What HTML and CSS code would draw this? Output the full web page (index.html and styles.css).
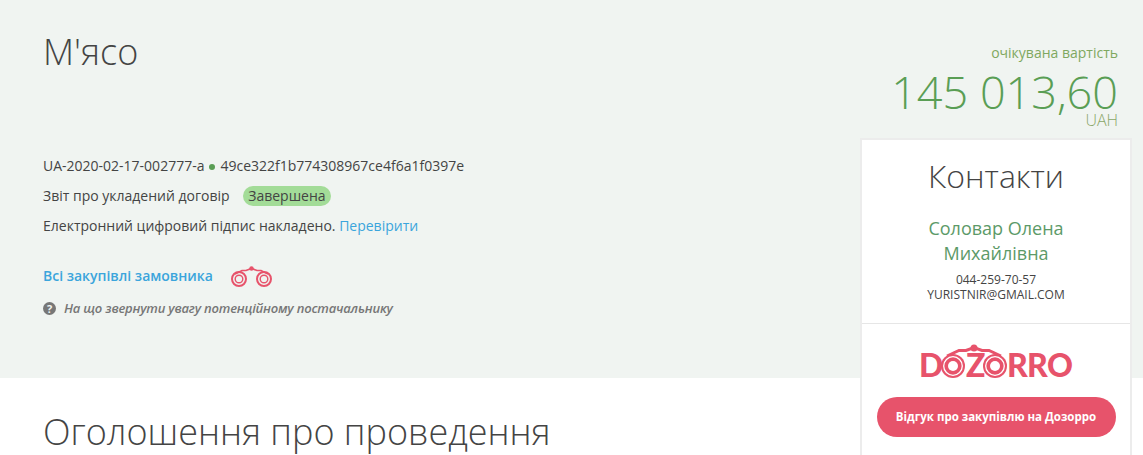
FILE: index.html
```html
<!DOCTYPE html>
<html lang="uk">

<head>
    <meta charset="UTF-8">
    <meta name="viewport" content="width=device-width, initial-scale=1.0">
    <title>М'ясо</title>
    <link rel="stylesheet" href="styles.css">
</head>

<body>
    <section class="hero">
        <div class="info">
            <h1 class="title">М'ясо</h1>
            <div class="meta">
                <p class="meta-row">UA-2020-02-17-002777-a<span class="dot"></span>49ce322f1b774308967ce4f6a1f0397e</p>
                <p class="meta-row">Звіт про укладений договір <span class="status">Завершена</span></p>
                <p class="meta-row">Електронний цифровий підпис накладено. <a class="link" href="#">Перевірити</a></p>
            </div>
            <div class="buyer">
                <a class="link buyer-link" href="#">Всі закупівлі замовника</a>
                <svg class="binoculars" viewBox="0 0 41 21" width="41" height="21">
                    <g fill="none" stroke="#e7536b">
                        <path d="M4 8 L11 4.500 L15 4.500 L20.500 2.500 L26 4.500 L30 4.500 L37 8" stroke-width="1.700" />
                        <circle cx="8" cy="13" r="7" stroke-width="2" />
                        <circle cx="8" cy="13" r="3.800" stroke-width="1.400" />
                        <circle cx="33" cy="13" r="7" stroke-width="2" />
                        <circle cx="33" cy="13" r="3.800" stroke-width="1.400" />
                    </g>
                    <circle cx="20.500" cy="2.500" r="2.200" fill="#e7536b" />
                </svg>
            </div>
            <p class="hint"><span class="hint-icon">?</span><em>На що звернути увагу потенційному постачальнику</em></p>
        </div>

        <aside class="side">
            <div class="price">
                <div class="price-label">очікувана вартість</div>
                <div class="price-value">145 013,60</div>
                <div class="price-currency">UAH</div>
            </div>
            <div class="card">
                <div class="contacts">
                    <h2 class="contacts-title">Контакти</h2>
                    <div class="contacts-name">Соловар Олена Михайлівна</div>
                    <div class="contacts-line">044-259-70-57</div>
                    <div class="contacts-line">YURISTNIR@GMAIL.COM</div>
                </div>
                <div class="dozorro">
                    <div class="logo">
                        <div class="logo-text">
                            <span class="logo-d">D</span><span class="logo-o1">O</span><span class="logo-z">Z</span><span class="logo-o2">O</span><span class="logo-r">R</span><span class="logo-r">R</span><span class="logo-o3">O</span>
                        </div>
                        <svg class="logo-mark" viewBox="0 0 154 35" width="154" height="35">
                            <path d="M28 12 L40 6.500 L47 6.500 L55 3.500 L63 6.500 L70 6.500 L82 12" fill="none" stroke="#e7536b" stroke-width="3" />
                            <circle cx="55" cy="4" r="3.500" fill="#e7536b" />
                            <g fill="#e7536b">
                                <circle cx="34" cy="22" r="12" />
                                <circle cx="76" cy="22" r="12" />
                            </g>
                            <g fill="none" stroke="#fff">
                                <circle cx="34" cy="22" r="9.300" stroke-width="1.300" />
                                <circle cx="76" cy="22" r="9.300" stroke-width="1.300" />
                            </g>
                            <g fill="#fff">
                                <circle cx="34" cy="22" r="5" />
                                <circle cx="76" cy="22" r="5" />
                            </g>
                        </svg>
                    </div>
                    <a class="review-btn" href="#">Відгук про закупівлю на Дозорро</a>
                </div>
            </div>
        </aside>
    </section>

    <section class="notice">
        <h2 class="notice-title">Оголошення про проведення</h2>
    </section>
</body>

</html>
```

FILE: styles.css
```css
html,
body {
    height: 100%;
    overflow: hidden;
}

body {
    margin: 0;
    font-family: "Open Sans", Arial, sans-serif;
    font-size: 14px;
    color: #444;
    background: #fff;
}

.hero {
    display: flex;
    justify-content: space-between;
    height: 378px;
    padding: 0 11px 0 43px;
    background: #f0f4f1;
}

.title {
    margin: 0;
    padding-top: 27px;
    font-size: 36px;
    line-height: 49px;
    font-weight: 300;
    color: #444;
}

.meta {
    margin-top: 75px;
}

.meta-row {
    margin: 0;
    height: 30px;
    line-height: 30px;
    white-space: nowrap;
}

.dot {
    display: inline-block;
    width: 6px;
    height: 6px;
    margin: 0 5px 1px 5px;
    border-radius: 50%;
    background: #5a9e55;
}

.status {
    display: inline-block;
    margin-left: 10px;
    padding: 0 5px;
    height: 20px;
    line-height: 20px;
    border-radius: 10px;
    background: #a3dc98;
}

.link {
    color: #3ba5dc;
    text-decoration: none;
}

.buyer {
    display: flex;
    align-items: center;
    margin-top: 19px;
    height: 30px;
}

.buyer-link {
    font-weight: 600;
}

.binoculars {
    margin: 3px 0 0 18px;
}

.hint {
    display: flex;
    align-items: center;
    margin: 3px 0 0;
    height: 30px;
    font-size: 13px;
    font-weight: 600;
    letter-spacing: -0.2px;
    color: #777;
}

.hint-icon {
    display: inline-block;
    width: 13px;
    height: 13px;
    margin-right: 8px;
    border-radius: 50%;
    background: #777;
    color: #f0f4f1;
    font-size: 11px;
    font-weight: 700;
    line-height: 13px;
    text-align: center;
    letter-spacing: 0;
}

.side {
    width: 272px;
}

.price {
    padding: 41px 14px 0 0;
    text-align: right;
}

.price-label {
    line-height: 24px;
    color: #7fa860;
}

.price-value {
    font-size: 45px;
    line-height: 42px;
    margin-top: 6px;
    font-weight: 300;
    color: #5a9e55;
    white-space: nowrap;
}

.price-currency {
    font-size: 16px;
    line-height: 14px;
    font-weight: 300;
    color: #8aa668;
}

.card {
    margin-top: 11px;
    border: 2px solid #ececec;
    border-bottom: 0;
    background: #fff;
    height: 400px;
}

.contacts {
    padding: 0 20px 21px;
    text-align: center;
    border-bottom: 1px solid #e6e6e6;
}

.contacts-title {
    margin: 0;
    padding-top: 14px;
    font-size: 32px;
    line-height: 44px;
    font-weight: 300;
    color: #444;
}

.contacts-name {
    margin: 18px 0 6px;
    font-size: 18px;
    line-height: 25px;
    color: #5c9a68;
}

.contacts-line {
    font-size: 12px;
    line-height: 15px;
    color: #444;
}

.dozorro {
    display: flex;
    flex-direction: column;
    align-items: center;
    padding-top: 20px;
}

.logo {
    position: relative;
    width: 154px;
    height: 35px;
}

.logo-text {
    display: flex;
    align-items: baseline;
    padding-top: 8px;
    font-family: Lato, "Open Sans", sans-serif;
    font-size: 32px;
    font-weight: 900;
    line-height: 26px;
    color: #e7536b;
}

.logo-d {
    width: 22px;
    letter-spacing: -2px;
}

.logo-o1 {
    width: 25px;
    font-size: 24px;
    text-align: center;
}

.logo-z {
    width: 18px;
    text-align: center;
}

.logo-o2 {
    width: 23px;
    font-size: 24px;
    text-align: center;
}

.logo-r {
    width: 20px;
}

.logo-o3 {
    width: 26px;
}

.logo-mark {
    position: absolute;
    top: 0;
    left: 0;
}

.review-btn {
    display: block;
    margin-top: 18px;
    width: 239px;
    height: 40px;
    border-radius: 20px;
    background: #e7536b;
    color: #fff;
    font-size: 11.5px;
    font-weight: 700;
    line-height: 40px;
    text-align: center;
    text-decoration: none;
}

.notice {
    padding: 0 43px;
}

.notice-title {
    margin: 0;
    padding-top: 29px;
    font-size: 36px;
    line-height: 49px;
    font-weight: 300;
    color: #444;
}
```
